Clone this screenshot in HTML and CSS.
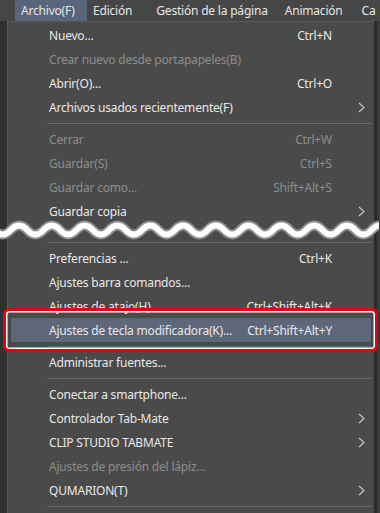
FILE: index.html
```html
<!DOCTYPE html>
<html lang="es">
<head>
    <meta charset="UTF-8">
    <meta name="viewport" content="width=device-width, initial-scale=1.0">
    <title>Archivo</title>
    <link rel="stylesheet" href="styles.css">
</head>
<body>
    <div class="menubar">
        <span class="menubar-item active">Archivo(F)</span>
        <span class="menubar-item m-edit">Edición</span>
        <span class="menubar-item m-page">Gestión de la página</span>
        <span class="menubar-item m-anim">Animación</span>
        <span class="menubar-item m-cam">Ca</span>
    </div>

    <div class="workspace">
        <div class="gutter-left"></div>

        <div class="menu">
            <div class="item"><span class="label">Nuevo...</span><span class="keys">Ctrl+N</span><span class="arrow"></span></div>
            <div class="item disabled"><span class="label">Crear nuevo desde portapapeles(B)</span><span class="keys"></span><span class="arrow"></span></div>
            <div class="item"><span class="label">Abrir(O)...</span><span class="keys">Ctrl+O</span><span class="arrow"></span></div>
            <div class="item"><span class="label">Archivos usados recientemente(F)</span><span class="keys"></span><span class="arrow"><svg width="7" height="11" viewBox="0 0 7 11"><polyline points="1,1 6,5.5 1,10"/></svg></span></div>
            <div class="separator"></div>
            <div class="item disabled"><span class="label">Cerrar</span><span class="keys">Ctrl+W</span><span class="arrow"></span></div>
            <div class="item disabled"><span class="label">Guardar(S)</span><span class="keys">Ctrl+S</span><span class="arrow"></span></div>
            <div class="item disabled"><span class="label">Guardar como...</span><span class="keys">Shift+Alt+S</span><span class="arrow"></span></div>
            <div class="item"><span class="label">Guardar copia</span><span class="keys"></span><span class="arrow"><svg width="7" height="11" viewBox="0 0 7 11"><polyline points="1,1 6,5.5 1,10"/></svg></span></div>

            <!-- cut in the screenshot -->
            <div class="break">
                <svg class="wave" width="380" height="28" viewBox="0 0 380 28">
                    <path class="wave-edge" d="M -21 12 q 8.2 -9 16.4 0 t 16.4 0 t 16.4 0 t 16.4 0 t 16.4 0 t 16.4 0 t 16.4 0 t 16.4 0 t 16.4 0 t 16.4 0 t 16.4 0 t 16.4 0 t 16.4 0 t 16.4 0 t 16.4 0 t 16.4 0 t 16.4 0 t 16.4 0 t 16.4 0 t 16.4 0 t 16.4 0 t 16.4 0 t 16.4 0 t 16.4 0 t 16.4 0 t 16.4 0 t 16.4 0"/>
                    <path class="wave-fill" d="M -21 12 q 8.2 -9 16.4 0 t 16.4 0 t 16.4 0 t 16.4 0 t 16.4 0 t 16.4 0 t 16.4 0 t 16.4 0 t 16.4 0 t 16.4 0 t 16.4 0 t 16.4 0 t 16.4 0 t 16.4 0 t 16.4 0 t 16.4 0 t 16.4 0 t 16.4 0 t 16.4 0 t 16.4 0 t 16.4 0 t 16.4 0 t 16.4 0 t 16.4 0 t 16.4 0 t 16.4 0 t 16.4 0"/>
                </svg>
            </div>

            <div class="separator"></div>
            <div class="item"><span class="label">Preferencias ...</span><span class="keys">Ctrl+K</span><span class="arrow"></span></div>
            <div class="item"><span class="label">Ajustes barra comandos...</span><span class="keys"></span><span class="arrow"></span></div>
            <div class="item"><span class="label">Ajustes de atajo(H)</span><span class="keys">Ctrl+Shift+Alt+K</span><span class="arrow"></span></div>
            <div class="item selected">
                <span class="label">Ajustes de tecla modificadora(K)...</span><span class="keys">Ctrl+Shift+Alt+Y</span><span class="arrow"></span>
                <div class="focus-ring"></div>
            </div>
            <div class="separator"></div>
            <div class="item"><span class="label">Administrar fuentes...</span><span class="keys"></span><span class="arrow"></span></div>
            <div class="separator"></div>
            <div class="item"><span class="label">Conectar a smartphone...</span><span class="keys"></span><span class="arrow"></span></div>
            <div class="item"><span class="label">Controlador Tab-Mate</span><span class="keys"></span><span class="arrow"><svg width="7" height="11" viewBox="0 0 7 11"><polyline points="1,1 6,5.5 1,10"/></svg></span></div>
            <div class="item"><span class="label">CLIP STUDIO TABMATE</span><span class="keys"></span><span class="arrow"><svg width="7" height="11" viewBox="0 0 7 11"><polyline points="1,1 6,5.5 1,10"/></svg></span></div>
            <div class="item disabled"><span class="label">Ajustes de presión del lápiz...</span><span class="keys"></span><span class="arrow"></span></div>
            <div class="item"><span class="label">QUMARION(T)</span><span class="keys"></span><span class="arrow"><svg width="7" height="11" viewBox="0 0 7 11"><polyline points="1,1 6,5.5 1,10"/></svg></span></div>
            <div class="separator"></div>
        </div>

        <div class="gutter-right"></div>
    </div>
</body>
</html>
```

FILE: styles.css
```css
body {
    margin: 0;
    width: 380px;
    height: 513px;
    overflow: hidden;
    background-color: #353535;
    font-family: "Noto Sans", "Open Sans", sans-serif;
    font-size: 12px;
    letter-spacing: -0.2px;
    color: #e8e8e8;
}

.menubar {
    display: flex;
    align-items: center;
    height: 21px;
    background-color: #464646;
    white-space: nowrap;
    overflow: hidden;
}

.menubar-item {
    padding: 0 6px;
    line-height: 21px;
    color: #e6e6e6;
}

.menubar-item.active {
    margin-left: 15px;
    min-width: 60px;
    background-color: #58657b;
}

.m-page {
    margin-left: 12px;
}

.m-anim {
    margin-left: 5px;
}

.m-cam {
    margin-left: 7px;
}

.workspace {
    display: flex;
    height: 492px;
    overflow: hidden;
}

.gutter-left {
    width: 7px;
    flex-shrink: 0;
    background-color: #303030;
}

.gutter-right {
    flex: 1;
    background-color: #3a3a3a;
    border-left: 3px solid #2b2b2b;
}

.menu {
    width: 360px;
    flex-shrink: 0;
    padding: 1px 3px 40px;
    background-color: #4a4a4a;
    border-left: 1px solid #5a5a5a;
    border-top: 1px solid #575757;
}

.item {
    position: relative;
    display: flex;
    align-items: center;
    height: 24px;
    padding-left: 38px;
    white-space: nowrap;
}

.item .label {
    flex: 1;
}

.item .keys {
    text-align: right;
}

.item .arrow {
    width: 39px;
    display: flex;
    justify-content: flex-end;
    padding-right: 6px;
    box-sizing: border-box;
}

.arrow polyline {
    fill: none;
    stroke: #c4c4c4;
    stroke-width: 1.2;
}

.disabled {
    color: #8c8c8c;
}

.selected {
    background-color: #5d6779;
    border-radius: 2px;
}

.focus-ring {
    position: absolute;
    top: -10px;
    bottom: -10px;
    left: -8px;
    right: -7px;
    border: 3px solid #e50012;
    border-radius: 6px;
    box-shadow: inset 0 0 0 1.5px #ffffff;
}

.separator {
    height: 8px;
    display: flex;
    align-items: center;
    padding-left: 36px;
}

.separator::after {
    content: "";
    flex: 1;
    height: 1px;
    background-color: #6a6a6a;
}

.break {
    position: relative;
    height: 15px;
}

.wave {
    position: absolute;
    top: -5px;
    left: -12px;
}

.wave-edge {
    fill: none;
    stroke: #8f8f8f;
    stroke-width: 10;
}

.wave-fill {
    fill: none;
    stroke: #ffffff;
    stroke-width: 6;
}
```
